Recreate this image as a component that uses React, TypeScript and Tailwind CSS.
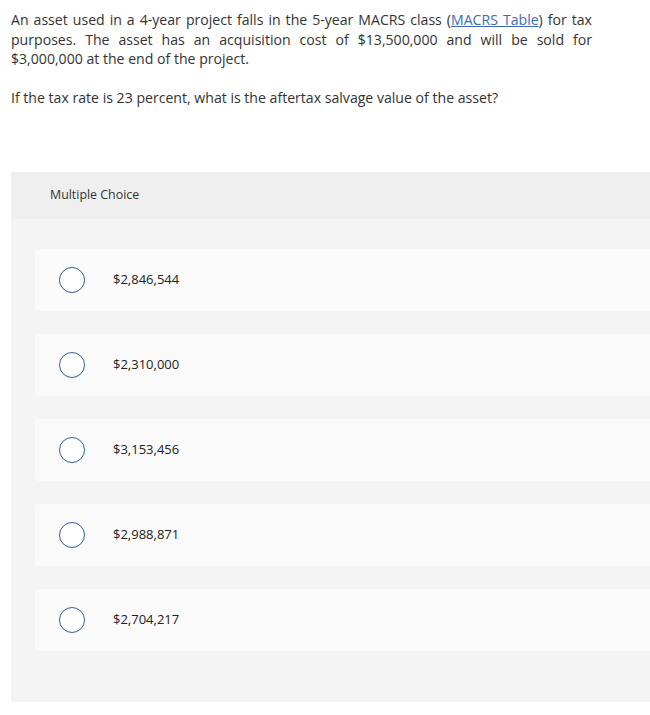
import React from "react";

const options = ["$2,846,544", "$2,310,000", "$3,153,456", "$2,988,871", "$2,704,217"];

export default function App() {
  return (
    <div className="w-[650px] overflow-hidden bg-white text-[#333] pb-[14px]" style={{ fontFamily: "'Open Sans', sans-serif" }}>
      <div className="pl-[11px] pr-[58px] pt-[10px] text-[14.1px] leading-[19.5px]">
        <p className="text-justify">
          An asset used in a 4-year project falls in the 5-year MACRS class{" "}
          (<span className="text-[#3b6cb4] underline">MACRS Table</span>) for tax purposes. The asset has an acquisition cost of $13,500,000 and will be sold for $3,000,000 at the end of the project.
        </p>
        <p className="mt-[19px]">If the tax rate is 23 percent, what is the aftertax salvage value of the asset?</p>
      </div>
      <div className="ml-[11px] mt-[65px] w-[660px] rounded-[3px] bg-[#f4f4f4]">
        <div className="flex h-[47px] items-center rounded-t-[3px] bg-[#efefef] pl-[39px] text-[12.4px]">Multiple Choice</div>
        <div className="flex flex-col gap-[23px] pl-[24px] pt-[30px] pb-[51px]">
          {options.map((o) => (
            <div key={o} className="flex h-[62px] items-center rounded-[3px] bg-[#fafafa] pl-[24px]">
              <div className="h-[26px] w-[26px] rounded-full border-[1.5px] border-[#2f6196] bg-white" />
              <span className="ml-[28px] text-[13px] text-[#222]">{o}</span>
            </div>
          ))}
        </div>
      </div>
    </div>
  );
}
